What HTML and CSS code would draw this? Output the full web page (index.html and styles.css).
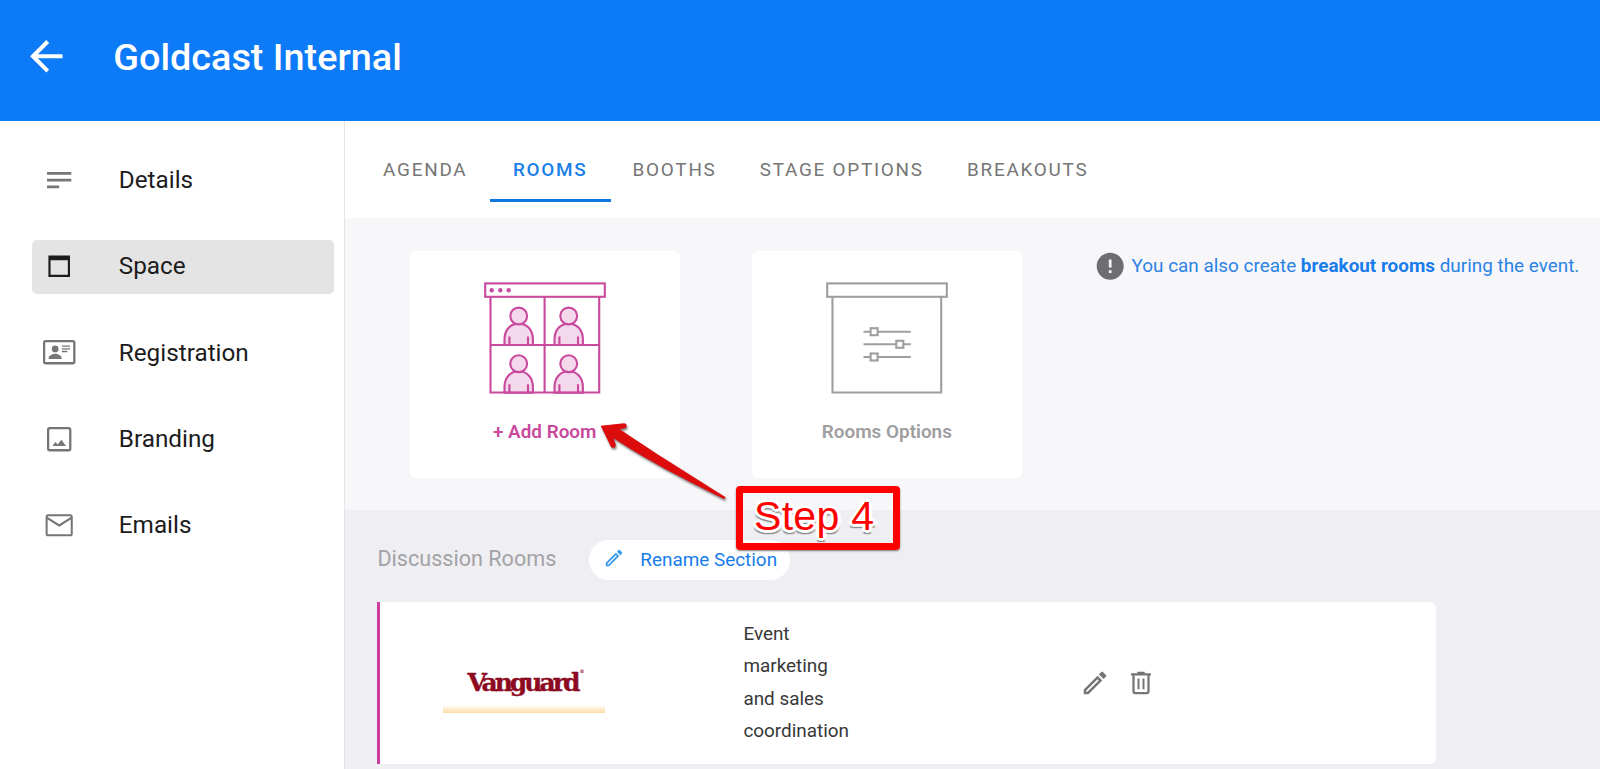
FILE: index.html
```html
<!DOCTYPE html>
<html lang="en">
<head>
    <meta charset="UTF-8">
    <meta name="viewport" content="width=device-width, initial-scale=1.0">
    <title>Goldcast Internal</title>
    <link rel="stylesheet" href="styles.css">
</head>
<body>
    <header class="topbar">
        <svg class="back-icon" viewBox="0 0 24 24"><path d="M20 11H7.83l5.59-5.59L12 4l-8 8 8 8 1.41-1.41L7.83 13H20v-2z"/></svg>
        <h1 class="topbar-title">Goldcast Internal</h1>
    </header>

    <div class="layout">
        <nav class="sidebar">
            <a class="nav-item">
                <svg class="icon" viewBox="0 0 24 24"><path d="M3 6h18v2H3zM3 11h18v2H3zM3 16h9v2H3z"/></svg>
                <span>Details</span>
            </a>
            <a class="nav-item active">
                <svg class="icon" viewBox="0 0 24 24"><path fill-rule="evenodd" d="M4 4h16v16H4zM5.6 7.6v10.8h12.8V7.6z"/></svg>
                <span>Space</span>
            </a>
            <a class="nav-item">
                <svg class="icon" viewBox="0 0 24 24">
                    <rect x=".8" y="3.8" width="22.4" height="16.4" rx="1.2" fill="none" stroke="currentColor" stroke-width="1.7"/>
                    <circle cx="9" cy="9.6" r="2.5"/>
                    <path d="M4.2 17v-.8c0-1.9 3-3.1 4.8-3.1s4.8 1.2 4.8 3.1v.8zM14 7h6v1h-6zM14 9h6v1h-6zM14 11h4v1h-4z"/>
                </svg>
                <span>Registration</span>
            </a>
            <a class="nav-item">
                <svg class="icon" viewBox="0 0 24 24">
                    <rect x="3.8" y="3.8" width="16.4" height="16.4" rx="1.2" fill="none" stroke="currentColor" stroke-width="1.7"/>
                    <path d="M7 17l2.2-3 1.7 1.9 2.7-3.5L17 17z"/>
                </svg>
                <span>Branding</span>
            </a>
            <a class="nav-item">
                <svg class="icon" viewBox="0 0 24 24">
                    <g fill="none" stroke="currentColor" stroke-width="1.5">
                        <rect x="2.7" y="4.7" width="18.6" height="14.8" rx="1.2"/>
                        <path d="M3 6.6l9 5.6 9-5.6"/>
                    </g>
                </svg>
                <span>Emails</span>
            </a>
        </nav>

        <main class="content">
            <div class="tabs">
                <a class="tab">AGENDA</a>
                <a class="tab active">ROOMS</a>
                <a class="tab">BOOTHS</a>
                <a class="tab">STAGE OPTIONS</a>
                <a class="tab">BREAKOUTS</a>
            </div>

            <section class="actions">
                <div class="card card-add">
                    <svg class="card-art" viewBox="0 0 122 112">
                        <defs>
                            <g id="person">
                                <path d="M-14.2 29V23.5C-14.2 14-8.5 7.6 0 7.6S14.2 14 14.2 23.5V29z"/>
                                <circle r="8.4"/>
                                <path d="M-9.3 20.5V29M9.3 20.5V29"/>
                            </g>
                        </defs>
                        <g fill="none" stroke="currentColor" stroke-width="2.1">
                            <g fill="#f4d9ec">
                                <use href="#person" x="34.7" y="34"/>
                                <use href="#person" x="84.7" y="34"/>
                                <use href="#person" x="34.7" y="81.7"/>
                                <use href="#person" x="84.7" y="81.7"/>
                            </g>
                            <rect x="1.2" y="1.4" width="119.6" height="13.4"/>
                            <path d="M6.5 15v95.5h108.7V15M60.6 15v95.5M6.5 63h108.7"/>
                        </g>
                        <g fill="currentColor">
                            <circle cx="7.7" cy="8.3" r="2.2"/>
                            <circle cx="16.3" cy="8.3" r="2.2"/>
                            <circle cx="24.7" cy="8.3" r="2.2"/>
                        </g>
                    </svg>
                    <span>+ Add Room</span>
                </div>
                <div class="card card-options">
                    <svg class="card-art" viewBox="0 0 122 112">
                        <g fill="none" stroke="currentColor" stroke-width="2.1">
                            <rect x="1.2" y="1.4" width="119.6" height="13.4"/>
                            <path d="M6.5 15v95.5h108.7V15"/>
                            <path d="M37.5 49.7h47.3M37.5 62.3h47.3M37.5 75h47.3"/>
                            <g fill="#fff">
                                <rect x="44.6" y="46.2" width="7" height="7"/>
                                <rect x="70.3" y="58.8" width="7" height="7"/>
                                <rect x="44.6" y="71.5" width="7" height="7"/>
                            </g>
                        </g>
                    </svg>
                    <span>Rooms Options</span>
                </div>
                <div class="hint">
                    <svg class="icon" viewBox="0 0 24 24"><path d="M12 2C6.48 2 2 6.48 2 12s4.48 10 10 10 10-4.48 10-10S17.52 2 12 2zm1 15h-2v-2h2v2zm0-4h-2V7h2v6z"/></svg>
                    <p>You can also create <b>breakout rooms</b> during the event.</p>
                </div>
            </section>

            <section class="rooms">
                <div class="section-head">
                    <h2>Discussion Rooms</h2>
                    <button class="rename">
                        <svg viewBox="0 0 24 24"><path d="M14.06 9.02l.92.92L5.92 19H5v-.92l9.06-9.06M17.66 3c-.25 0-.51.1-.7.29l-1.83 1.83 3.75 3.75 1.83-1.83c.39-.39.39-1.02 0-1.41l-2.34-2.34c-.2-.2-.45-.29-.71-.29zm-3.6 3.19L3 17.25V21h3.75L17.81 9.94l-3.75-3.75z"/></svg>
                        <span>Rename Section</span>
                    </button>
                </div>

                <div class="room">
                    <div class="room-logo"><span>Vanguard</span><sup>®</sup></div>
                    <p class="room-name">Event marketing and sales coordination</p>
                    <div class="room-actions">
                        <svg viewBox="0 0 24 24"><path d="M14.06 9.02l.92.92L5.92 19H5v-.92l9.06-9.06M17.66 3c-.25 0-.51.1-.7.29l-1.83 1.83 3.75 3.75 1.83-1.83c.39-.39.39-1.02 0-1.41l-2.34-2.34c-.2-.2-.45-.29-.71-.29zm-3.6 3.19L3 17.25V21h3.75L17.81 9.94l-3.75-3.75z"/></svg>
                        <svg viewBox="0 0 24 24">
                            <path d="M4 4.2h5V3h6v1.2h5V6H4z"/>
                            <path d="M6 5v13.6c0 .9.5 1.5 1.5 1.5h9c1 0 1.5-.6 1.5-1.5V5" fill="none" stroke="currentColor" stroke-width="1.8"/>
                            <path d="M9.2 8.3h1.6V17H9.2zM13.2 8.3h1.6V17h-1.6z"/>
                        </svg>
                    </div>
                </div>
            </section>
        </main>
    </div>

    <!-- Step marker -->
    <svg class="step-arrow" viewBox="0 0 135 85">
        <path d="M5.7 5.7L29 3.3c3.5-.1 3.5 4.9.3 5.1l-4.8.7C55 30 95 55 130.7 77.3l-1.4 1.7C90 60 48 38 18.3 18l2.4 6.5c.8 3.2-3.6 4.6-5 1.8z"/>
    </svg>
    <div class="step-label">Step 4</div>
</body>
</html>
```
FILE: styles.css
```css
* {
    margin: 0;
    padding: 0;
    box-sizing: border-box;
}

body {
    height: 769px;
    display: flex;
    flex-direction: column;
    overflow: hidden;
    background: #ffffff;
    font-family: Roboto, sans-serif;
    font-size: 18.9px;
    color: #1c1c1c;
}

svg {
    fill: currentColor;
    flex-shrink: 0;
}

.icon {
    width: 32.4px;
    height: 32.4px;
}

/* Top bar */
.topbar {
    display: flex;
    align-items: center;
    height: 121px;
    flex-shrink: 0;
    padding: 0 0 8px 21.6px;
    background: #0d7af8;
    color: #ffffff;
}

.back-icon {
    width: 48.6px;
    height: 48.6px;
}

.topbar-title {
    margin-left: 43px;
    font-size: 37.8px;
    font-weight: 500;
}

.layout {
    display: flex;
    flex: 1;
    min-height: 0;
}

/* Sidebar */
.sidebar {
    display: flex;
    flex-direction: column;
    gap: 32.4px;
    width: 345px;
    flex-shrink: 0;
    padding: 32.4px 10px 0 32.4px;
    border-right: 1px solid #e4e4e4;
}

.nav-item {
    display: flex;
    align-items: center;
    gap: 43.2px;
    height: 54px;
    padding-left: 10.8px;
    border-radius: 5px;
    font-size: 24.3px;
}

.nav-item span {
    padding-bottom: 2px;
}

.nav-item .icon {
    margin-top: -1px;
    color: #757575;
}

.nav-item.active {
    background: #e4e4e4;
}

.nav-item.active .icon {
    color: #1c1c1c;
}

/* Tabs */
.content {
    display: flex;
    flex-direction: column;
    flex: 1;
    min-width: 0;
}

.tabs {
    display: flex;
    height: 97px;
    flex-shrink: 0;
    padding: 16px 0 16px 16px;
}

.tab {
    display: flex;
    align-items: center;
    justify-content: center;
    min-width: 121.5px;
    padding: 3px 21.6px 0;
    border-bottom: 3px solid transparent;
    letter-spacing: 1.75px;
    color: #757575;
}

.tab:first-child {
    min-width: 128.5px;
}

.tab.active {
    border-color: #0f78e0;
    font-weight: 500;
    color: #1a7fe8;
}

/* Action cards */
.actions {
    display: flex;
    align-items: flex-start;
    height: 292px;
    flex-shrink: 0;
    padding: 33px 0 0 65px;
    background: #f7f7fa;
}

.card {
    display: flex;
    flex-direction: column;
    align-items: center;
    width: 269.5px;
    height: 227px;
    margin-right: 72.6px;
    padding-top: 31px;
    border-radius: 6px;
    background: #ffffff;
    font-weight: 600;
}

.card-art {
    width: 122px;
    height: 112px;
    margin-bottom: 26px;
}

.card-add {
    color: #c9499d;
}

.card-options {
    color: #9e9e9e;
}

.hint {
    display: flex;
    align-items: center;
    gap: 5px;
    margin-top: -1.5px;
    white-space: nowrap;
    color: #2b83e4;
}

.hint .icon {
    color: #6e6e70;
}

.hint b {
    color: #187ceb;
}

/* Rooms list */
.rooms {
    flex: 1;
    padding: 29.7px 0 0 32.4px;
    background: #efeef3;
}

.section-head {
    display: flex;
    align-items: center;
    gap: 33px;
    height: 40.5px;
    margin-bottom: 21.6px;
}

.section-head h2 {
    padding-bottom: 2px;
    font-size: 21.6px;
    font-weight: 400;
    color: #a3a3a5;
}

.rename {
    display: flex;
    align-items: center;
    gap: 15px;
    height: 40.5px;
    padding: 0 13px 0 14px;
    border: none;
    border-radius: 21px;
    background: #ffffff;
    font: inherit;
    color: #187cea;
}

.rename svg {
    width: 22px;
    height: 22px;
    margin-top: -3px;
    color: #3d9ae8;
}

.room {
    display: flex;
    align-items: center;
    width: 1058.4px;
    height: 162px;
    border-left: 3px solid #cb3d9f;
    border-radius: 0 6px 6px 0;
    background: #ffffff;
}

.room-logo {
    display: flex;
    justify-content: center;
    align-items: flex-start;
    width: 162px;
    height: 60px;
    margin-left: 63px;
    padding-top: 15px;
    background: linear-gradient(#ffffff 52px, #fbdda6 60px);
    font-family: "DejaVu Serif", serif;
    font-size: 25px;
    font-weight: 700;
    letter-spacing: -3px;
    color: #8c0a22;
    -webkit-text-stroke: 0.4px #8c0a22;
}

.room-logo sup {
    margin-left: 2px;
    font-size: 5px;
    -webkit-text-stroke: 0;
}

.room-name {
    width: 110px;
    margin-left: 138px;
    line-height: 32.4px;
    color: #383838;
}

.room-actions {
    display: flex;
    gap: 16px;
    margin-left: 227px;
    color: #757575;
}

.room-actions svg {
    width: 30px;
    height: 30px;
}

/* Step marker, drawn over the page */
.step-arrow {
    position: absolute;
    left: 595px;
    top: 420px;
    width: 135px;
    height: 85px;
    fill: #dc0c0c;
    filter: drop-shadow(1px 2px 1px rgba(0, 0, 0, 0.5));
}

.step-label {
    position: absolute;
    left: 736px;
    top: 486px;
    width: 164px;
    height: 64px;
    padding-left: 11px;
    border: 7px solid #ff0000;
    border-radius: 4px;
    box-shadow: 0 1px 2px rgba(0, 0, 0, 0.5);
    font-family: "Liberation Sans", Arial, sans-serif;
    font-size: 41px;
    letter-spacing: 0.3px;
    line-height: 47px;
    white-space: nowrap;
    color: #ff0000;
    text-shadow: 3px 0 #fff, -3px 0 #fff, 0 3px #fff, 0 -3px #fff, 2px 2px #fff, -2px 2px #fff, 2px -2px #fff, -2px -2px #fff, 3px 1px #fff, -3px 1px #fff, 0 4px 1px #888, -2px 4px 1px #999, 2px 4px 1px #999;
}
```
